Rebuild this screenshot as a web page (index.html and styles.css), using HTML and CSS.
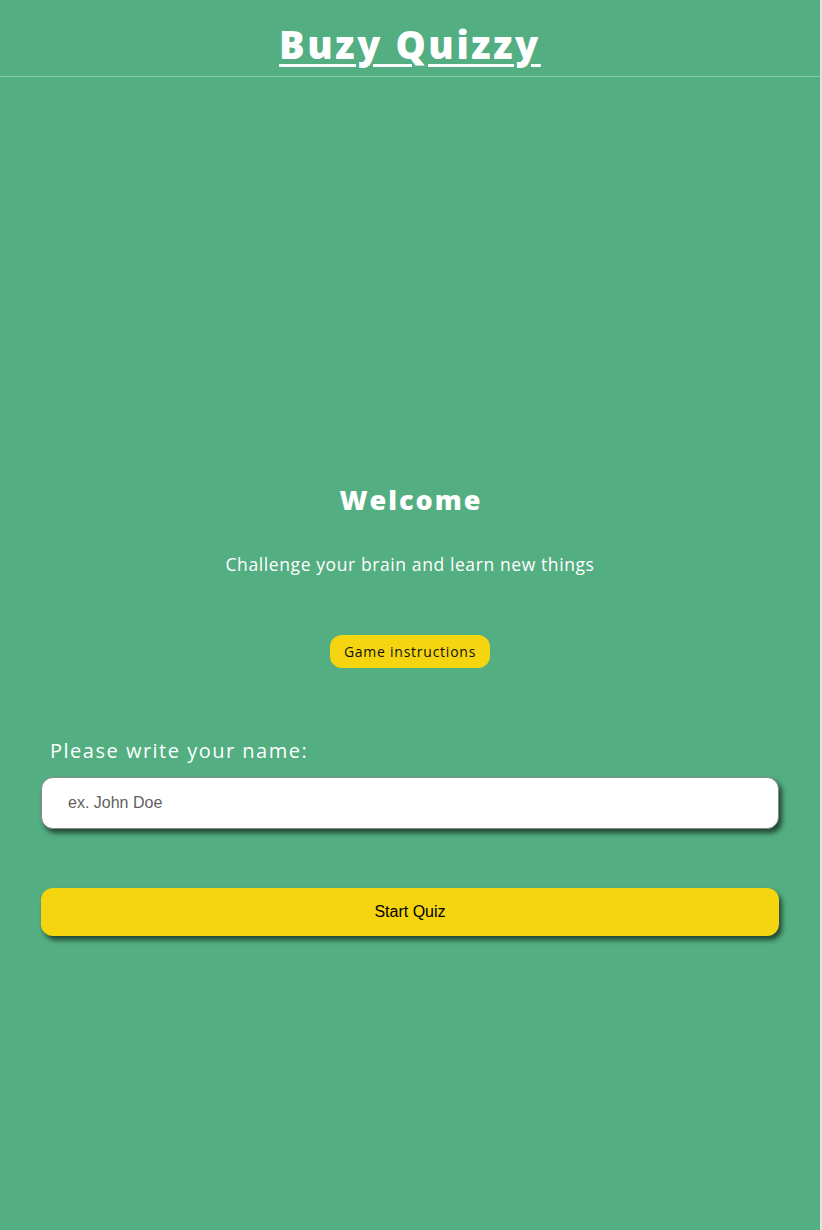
FILE: index.html
```html
<!DOCTYPE html>
<html lang="en">
<head>
<meta charset="utf-8">
<title>Buzy Quizzy</title>
<link rel="stylesheet" href="styles.css">
</head>
<body>
<div class="page">
  <header class="site-header">
    <h1 class="title"><a href="#">Buzy Quizzy</a></h1>
  </header>
  <main class="home">
    <section class="intro">
      <h2 class="intro-title">Welcome</h2>
      <p class="intro-text">Challenge your brain and learn new things</p>
      <button class="btn-instructions" type="button">Game instructions</button>
    </section>
    <form class="name-form">
      <label class="name-label" for="username">Please write your name:</label>
      <input class="name-input" id="username" type="text" placeholder="ex. John Doe">
      <button class="btn-start" type="button">Start Quiz</button>
    </form>
  </main>
</div>
</body>
</html>
```

FILE: styles.css
```css
html {
  background: #e6e1e6;
}
body {
  margin: 0;
  font-family: "Open Sans", "Noto Sans", sans-serif;
}
.page {
  width: 820px;
  min-height: 1230px;
  background: #53ae81;
}
.site-header {
  height: 76px;
  border-bottom: 1px solid #86cba5;
  display: flex;
  justify-content: center;
  align-items: flex-start;
}
.title {
  margin: 19px 0 0;
  font-size: 38px;
  font-weight: 800;
  line-height: 50px;
  letter-spacing: 2.6px;
}
.title a {
  color: #fff;
  text-decoration: underline;
  text-decoration-thickness: 3px;
  text-underline-offset: 5px;
}
.home {
  display: flex;
  flex-direction: column;
}
.intro {
  display: flex;
  flex-direction: column;
  align-items: center;
  padding-top: 405px;
  color: #fff;
}
.intro-title {
  margin: 0;
  font-size: 27px;
  font-weight: 800;
  line-height: 36px;
  letter-spacing: 2px;
  padding-left: 2px;
}
.intro-text {
  margin: 34px 0 0;
  font-size: 17.5px;
  line-height: 24px;
  letter-spacing: 0.6px;
}
.btn-instructions {
  margin-top: 59px;
  height: 33px;
  padding: 0 14px;
  border: none;
  border-radius: 12px;
  background: #f4d510;
  color: #111;
  font-family: "Open Sans", "Noto Sans", sans-serif;
  font-size: 14px;
  letter-spacing: 0.75px;
}
.name-form {
  display: flex;
  flex-direction: column;
  padding: 0 41px;
  margin-top: 69px;
}
.name-label {
  color: #fff;
  font-size: 20px;
  line-height: 28px;
  letter-spacing: 1.5px;
  padding-left: 9px;
}
.name-input {
  margin-top: 12px;
  height: 52px;
  box-sizing: border-box;
  border: 1px solid #8a8a8a;
  border-radius: 12px;
  padding: 0 26px;
  background: #fff;
  font-family: "Liberation Sans", Arial, sans-serif;
  font-size: 16px;
  color: #333;
  box-shadow: 3px 4px 5px rgba(0, 0, 0, 0.6);
}
.name-input::placeholder {
  color: #5f5f5f;
}
.btn-start {
  margin-top: 59px;
  height: 48px;
  border: none;
  border-radius: 12px;
  background: #f4d510;
  color: #000;
  font-family: "Liberation Sans", Arial, sans-serif;
  font-size: 16px;
  box-shadow: 3px 4px 5px rgba(0, 0, 0, 0.6);
}
```
